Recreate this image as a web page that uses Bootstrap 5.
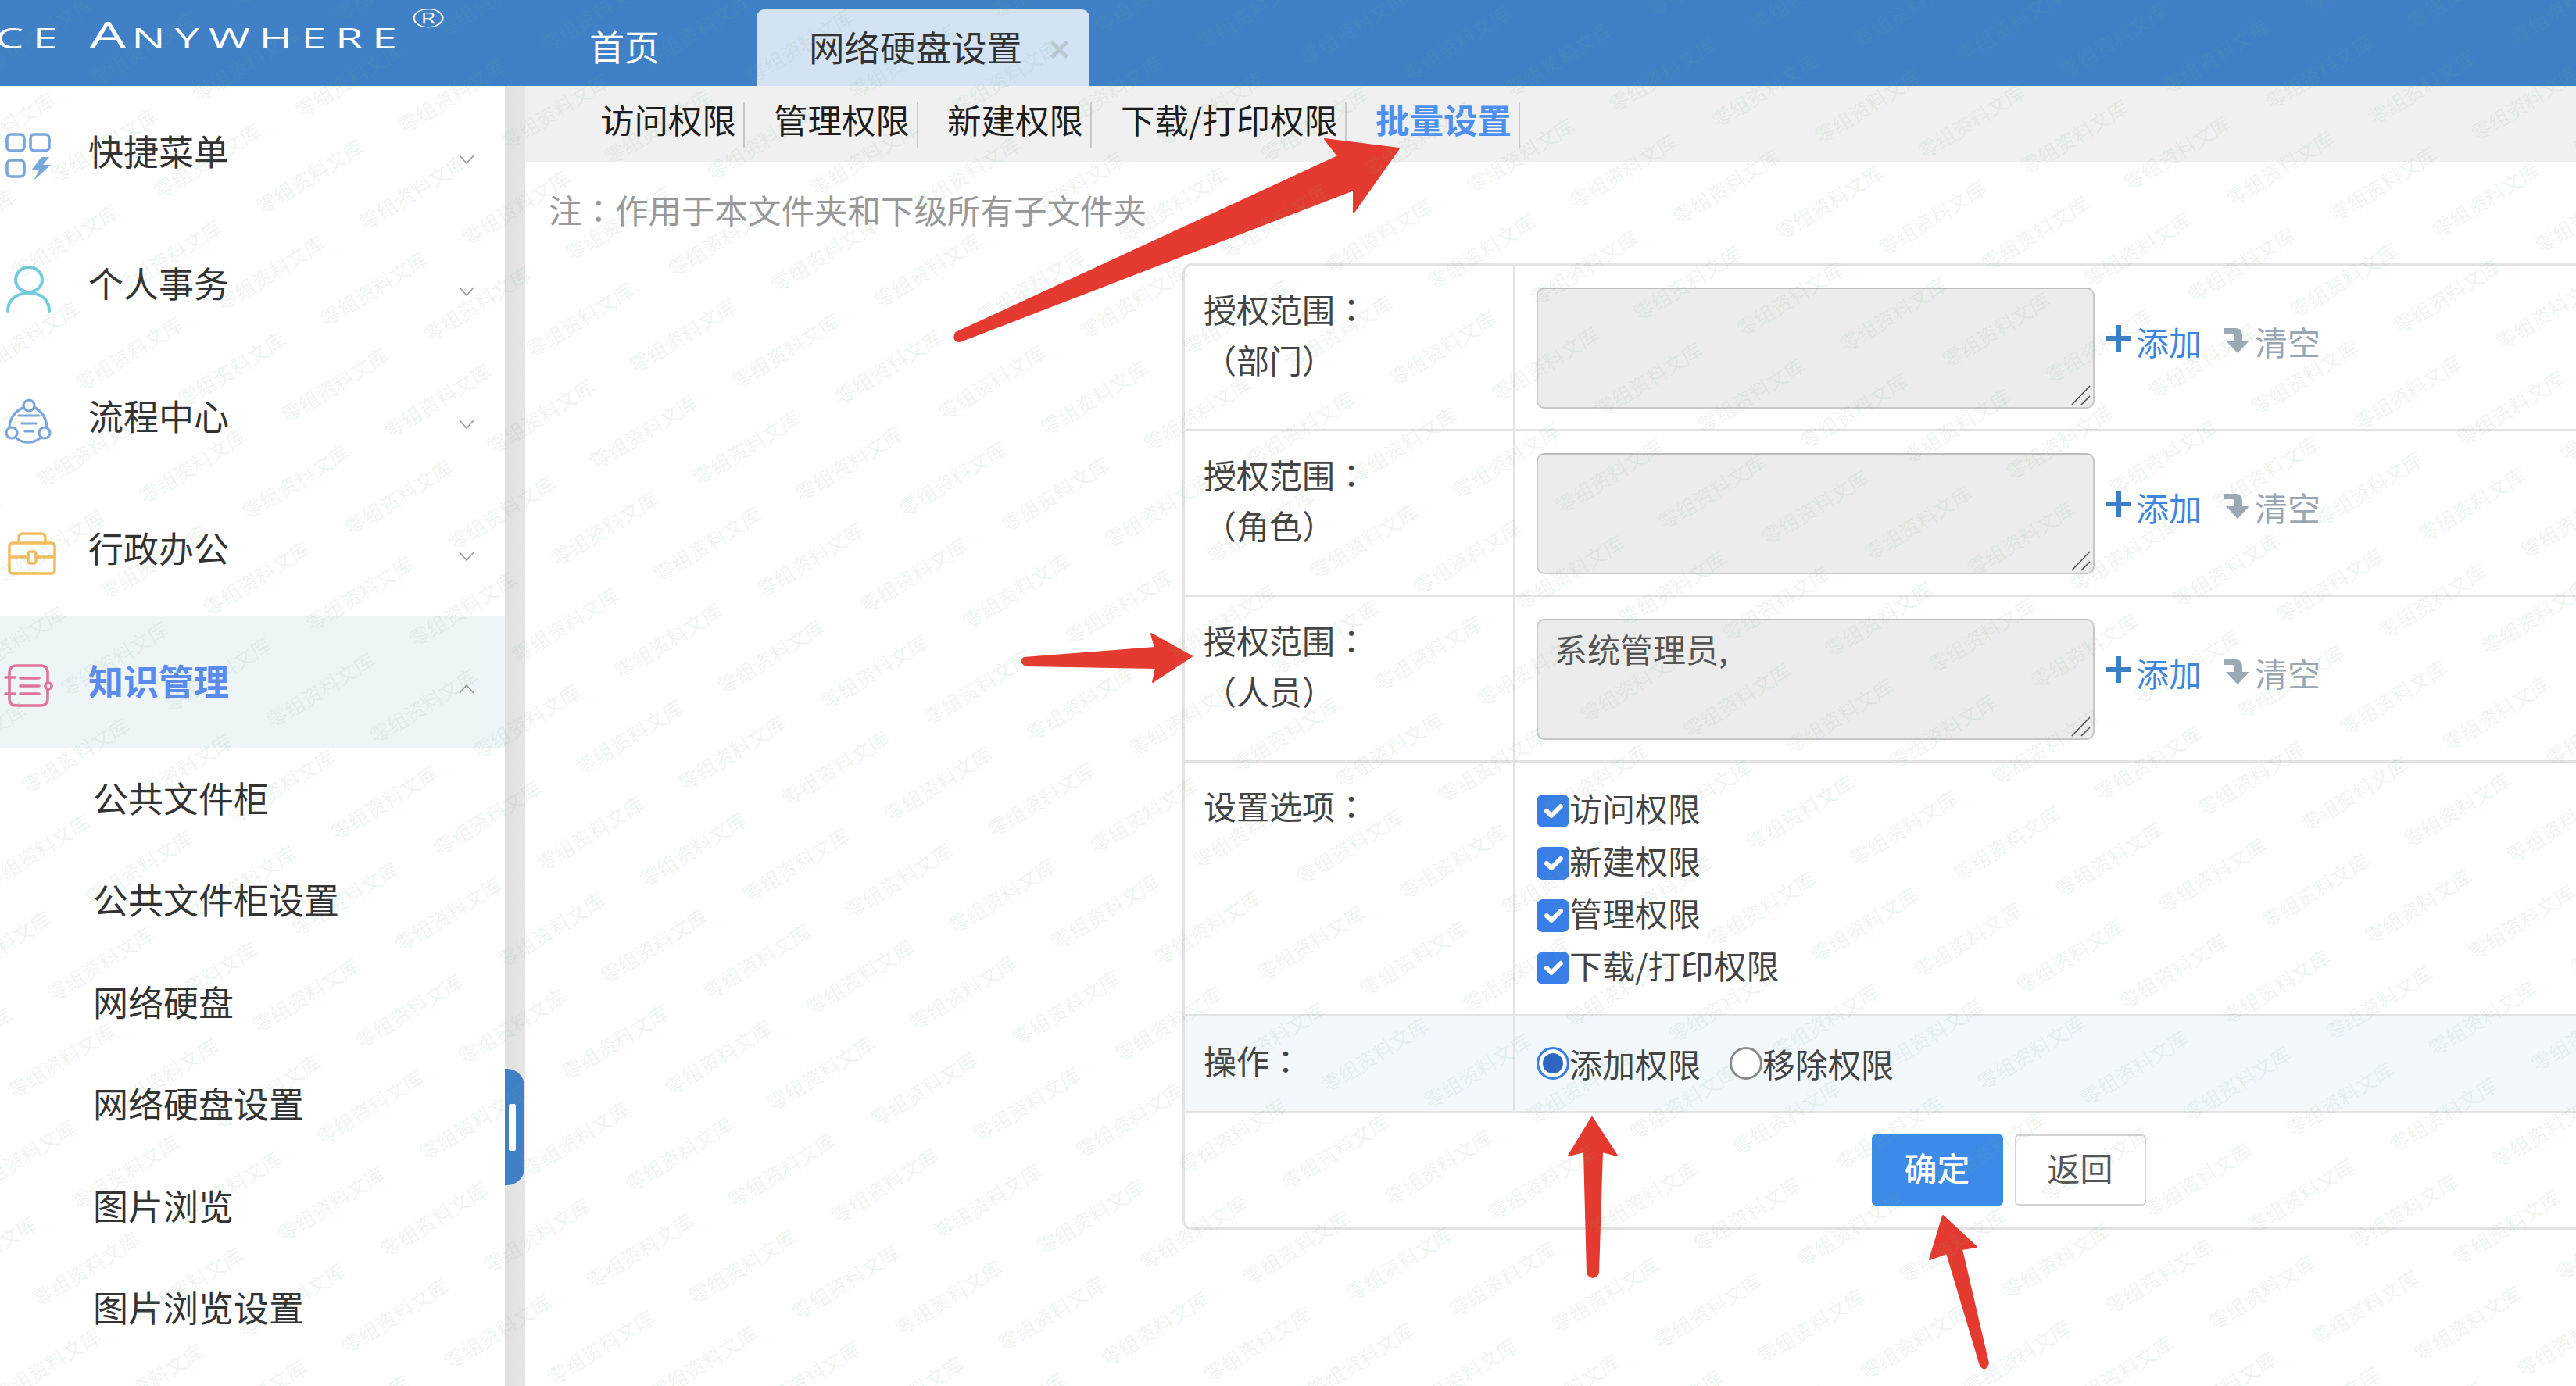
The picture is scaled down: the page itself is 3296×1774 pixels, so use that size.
<!DOCTYPE html>
<html lang="zh-CN">
<head>
<meta charset="utf-8">
<title>网络硬盘设置</title>
<link rel="stylesheet" href="https://cdn.jsdelivr.net/npm/bootstrap@5.3.0/dist/css/bootstrap.min.css">
<style>
html,body{width:3296px;height:1774px;overflow:hidden;margin:0;background:#fff}
body{color:#333;font-family:"Noto Sans CJK SC","Liberation Sans",sans-serif;font-size:42px;line-height:1.2}
.top-bar{height:110px;background:#4080c6;flex:none}
.brand-box{width:754px;flex:none;overflow:hidden;color:#fff;font-family:"Open Sans",sans-serif;font-weight:400;white-space:nowrap;padding-top:14px}
.brand-inner{margin-left:-6px;font-size:36px;letter-spacing:7.2px;line-height:60px;transform:scaleX(1.6);transform-origin:left center}
.brand-big{font-size:47px;letter-spacing:4px}
.brand-gap{display:inline-block;width:18px}
.brand-reg{font-size:33px;font-weight:300;letter-spacing:0;vertical-align:27px;margin-left:4px;line-height:0}
.home-tab{color:#fff;font-size:45px;width:214px;padding-top:29px;line-height:60px}
.cur-tab{width:426px;margin-top:12px;height:98px;background:#d3e3f3;border-radius:10px 10px 0 0;padding-left:67px;font-size:45.5px;line-height:94px;color:#333}
.cur-close{color:#bcc7d2;font-weight:700;font-size:46px;margin-left:34px;font-family:"Liberation Sans",sans-serif}
.body-row{height:1664px}
.side-menu{width:646px;flex:none;background:#fff}
.side-row{height:169.5px;font-size:45px;color:#333;padding-right:39px}
.side-row>span{padding-bottom:4px}
.side-row.is-open{background:#eef5f7;color:#5b8bef;font-weight:700}
.side-ico{width:113px;height:70px;flex:none;overflow:visible}
.side-chev{margin-top:18px;flex:none;margin-left:auto}
.sub-row{height:130.6px;padding-left:119px;font-size:45px;color:#333;line-height:126.6px}
.split-strip{width:26px;flex:none;background:linear-gradient(to right,#e0e0e0,#e6e6e6)}
.split-grip{width:25px;height:149px;margin-top:1258px;background:#4080c6;border-radius:0 22px 22px 0;padding-left:5px}
.split-grip i{display:block;width:9px;height:60px;background:#fff;border-radius:2px}
.work-area{flex:1 1 auto;min-width:0;overflow:hidden;background:#fff}
.tab-bar{height:97px;background:#f0f0f0;padding:20px 0 0 96px;flex:none}
.tab-item{height:60px;font-size:43.5px;line-height:46px;color:#1c1c1c;padding-right:9px;margin-right:37px;border-right:2px solid #c9c9c9;white-space:nowrap}
.tab-item.is-on{color:#4e90f0;font-weight:700}
.note-line{font-size:42.5px;line-height:60px;color:#999;padding:31px 0 2px 30px}
.mid-colon{font-family:"Noto Sans CJK TC",sans-serif}
.perm-table{width:2114px;margin:37px 0 0 841px;table-layout:fixed;border-collapse:separate;border-spacing:0;border:3px solid #e3e3e3;border-radius:12px 0 0 12px;font-size:42px;color:#444}
.perm-table>tbody>tr>td{padding:0;border-width:0 0 3px 0;border-style:solid;border-color:#e3e3e3;background:transparent;color:#444;box-shadow:none}
.perm-table>tbody>tr>td.lbl-cell{width:422px;border-right:2px solid #e3e3e3;padding:22px 0 0 24px;line-height:65px}
.perm-table>tbody>tr>td.val-cell{padding:28px 0 0 28px}
.perm-table>tbody>tr.h-a>td{height:212px}
.perm-table>tbody>tr.h-b>td{height:325px}
.perm-table>tbody>tr.h-c>td{height:124px;background:#f3f8fd;padding-top:0;padding-bottom:0;vertical-align:middle}
.perm-table>tbody>tr.h-c>td.lbl-cell{padding-bottom:11px;padding-top:0}
.perm-table>tbody>tr.h-d>td{height:146px;border-bottom:0;padding-top:27px;vertical-align:top}
.box-wrap{width:714px;height:155px;flex:none}
.area-input{width:714px;height:155px;background:#ececec;border:2px solid #c8c8c8;border-top-color:#bdbdbd;border-radius:10px;padding:10px 21px;font-size:42px;line-height:52px;color:#555;resize:none}
.area-input:focus{background:#ececec;border-color:#c8c8c8;box-shadow:none;color:#555}
.area-grip{position:absolute;right:4px;bottom:3px}
.act-add{color:#3f86e0;margin-left:15px;padding-bottom:18px;text-decoration:none;line-height:60px;gap:6px}
.act-add svg{margin-top:-8px}
.act-clear{color:#9aa7b3;margin-left:28px;padding-bottom:18px;text-decoration:none;line-height:60px;gap:6px}
.act-clear svg{margin-top:-4px}
.chk-line{height:67px;gap:0;color:#444;line-height:1}
.chk-line>span{padding-bottom:8px}
.chk-line .form-check-input,.rad-line .form-check-input{width:42px;height:42px;margin:0;flex:none}
.chk-line .form-check-input:checked{background-color:#3a7ee8;border-color:#3a7ee8;border-radius:8px}
.rad-line{gap:0}
.rad-line .form-check-input{border:3px solid #8a8a8a;background-color:#fff}
.rad-line .form-check-input:checked{background:#2f67c0;border:3px solid #3a7ee8;box-shadow:inset 0 0 0 5px #fff}
.rad-second{margin-left:37px}
.pair-gap{gap:15px}
.btn-ok,.btn-back{width:168px;height:91px;font-size:42px;padding:0 0 6px;border-radius:5px;line-height:1.2}
.btn-ok{background:#3d8be8;border-color:#3d8be8;color:#fff;font-weight:500}
.btn-back{background:#fff;border:2px solid #d4d4d4;color:#555}
.over-layer{position:absolute;left:0;top:0;width:3296px;height:1774px;pointer-events:none}
.wm-text{font-family:"Noto Sans CJK SC",sans-serif;font-size:26px;fill:rgba(110,180,120,.13)}
</style>
</head>
<body>
<header class="top-bar d-flex">
  <div class="brand-box">
    <div class="brand-inner">CE<span class="brand-gap"></span><span class="brand-big">A</span>NYWHERE<span class="brand-reg">®</span></div>
  </div>
  <div class="home-tab">首页</div>
  <div class="cur-tab">网络硬盘设置<span class="cur-close">×</span></div>
</header>

<div class="body-row d-flex">
  <aside class="side-menu">
    <div class="side-row d-flex align-items-center">
      <svg class="side-ico" viewBox="0 0 113 70" fill="none" stroke="#7ba6dc" stroke-width="3.6"><rect x="9" y="12" width="22" height="21" rx="5"/><rect x="39" y="12" width="24" height="21" rx="5"/><rect x="9" y="45" width="22" height="21" rx="5"/><path d="M53 41L40 58L50 58L43 71L65 51L55 51L63 41Z" fill="#7ba6dc" stroke="none"/></svg>
      <span>快捷菜单</span>
      <svg class="side-chev" width="20" height="12" viewBox="0 0 20 12" fill="none" stroke="#999" stroke-width="1.6"><path d="M1 1l9 10 9-10"/></svg>
    </div>
    <div class="side-row d-flex align-items-center">
      <svg class="side-ico" viewBox="0 0 113 70" fill="none" stroke="#74cbdd" stroke-width="4" stroke-linecap="round"><ellipse cx="37" cy="29" rx="17" ry="16"/><path d="M10 69c0-14 11-23 27-23s26 9 26 23"/></svg>
      <span>个人事务</span>
      <svg class="side-chev" width="20" height="12" viewBox="0 0 20 12" fill="none" stroke="#999" stroke-width="1.6"><path d="M1 1l9 10 9-10"/></svg>
    </div>
    <div class="side-row d-flex align-items-center">
      <svg class="side-ico" viewBox="0 0 113 70" fill="none" stroke="#7ba6dc" stroke-width="3.2" stroke-linecap="round"><circle cx="37" cy="20" r="7"/><circle cx="15" cy="55" r="7"/><circle cx="57" cy="55" r="7"/><path d="M29 23C19 28 13 36 12 47M45 23c9 5 14 13 15 24M21 62c9 7 21 7 30 0"/><path d="M24 33h26M28 43h18M32 53h10"/></svg>
      <span>流程中心</span>
      <svg class="side-chev" width="20" height="12" viewBox="0 0 20 12" fill="none" stroke="#999" stroke-width="1.6"><path d="M1 1l9 10 9-10"/></svg>
    </div>
    <div class="side-row d-flex align-items-center">
      <svg class="side-ico" viewBox="0 0 113 70" fill="none" stroke="#f2bd5f" stroke-width="3.6"><rect x="12" y="27" width="58" height="39" rx="4"/><path d="M24 27v-7c0-3 2-5 5-5h24c3 0 5 2 5 5v7"/><path d="M12 45h24M46 45h24"/><rect x="36" y="38" width="10" height="15" rx="3"/></svg>
      <span>行政办公</span>
      <svg class="side-chev" width="20" height="12" viewBox="0 0 20 12" fill="none" stroke="#999" stroke-width="1.6"><path d="M1 1l9 10 9-10"/></svg>
    </div>
    <div class="side-row is-open d-flex align-items-center">
      <svg class="side-ico" viewBox="0 0 113 70" fill="none" stroke="#e0739a" stroke-width="3.6" stroke-linecap="round"><rect x="12" y="14" width="49" height="51" rx="8"/><path d="M7 29h12M7 50h12"/><path d="M26 30h24M26 40h24M26 50h24"/><circle cx="62" cy="40" r="4" fill="#eef5f7"/></svg>
      <span>知识管理</span>
      <svg class="side-chev" width="20" height="12" viewBox="0 0 20 12" fill="none" stroke="#999" stroke-width="1.6"><path d="M1 11l9-10 9 10"/></svg>
    </div>
    <div class="sub-row">公共文件柜</div>
    <div class="sub-row">公共文件柜设置</div>
    <div class="sub-row">网络硬盘</div>
    <div class="sub-row">网络硬盘设置</div>
    <div class="sub-row">图片浏览</div>
    <div class="sub-row">图片浏览设置</div>
  </aside>

  <div class="split-strip">
    <div class="split-grip d-flex align-items-center"><i></i></div>
  </div>

  <main class="work-area d-flex flex-column">
    <nav class="tab-bar d-flex">
      <div class="tab-item">访问权限</div>
      <div class="tab-item">管理权限</div>
      <div class="tab-item">新建权限</div>
      <div class="tab-item">下载/打印权限</div>
      <div class="tab-item is-on">批量设置</div>
    </nav>
    <div class="note-line">注<span class="mid-colon" lang="zh-TW">：</span>作用于本文件夹和下级所有子文件夹</div>
    <table class="table perm-table">
      <tbody>
        <tr class="h-a">
          <td class="lbl-cell">授权范围<span class="mid-colon" lang="zh-TW">：</span><br>（部门）</td>
          <td class="val-cell">
            <div class="d-flex align-items-center">
              <div class="box-wrap position-relative">
                <textarea class="form-control area-input" readonly></textarea>
                <svg class="area-grip" width="28" height="28" viewBox="0 0 28 28" fill="none" stroke="#555" stroke-width="1.6"><path d="M3 26L26 2M15 26L26 15"/></svg>
              </div>
              <a class="act-add d-flex align-items-center" href="#"><svg width="32" height="34" viewBox="0 0 32 34" fill="#3a7ec8"><path d="M13 0h6v14h13v6H19v14h-6V20H0v-6h13z"/></svg>添加</a>
              <a class="act-clear d-flex align-items-center" href="#"><svg width="34" height="34" viewBox="0 0 34 34" fill="#9aa9b5"><path d="M1 2h14c7 0 9 5 9 10v6h9L18 34 3 18h11v-5c0-3-1-4-4-4H1z"/></svg>清空</a>
            </div>
          </td>
        </tr>
        <tr class="h-a">
          <td class="lbl-cell">授权范围<span class="mid-colon" lang="zh-TW">：</span><br>（角色）</td>
          <td class="val-cell">
            <div class="d-flex align-items-center">
              <div class="box-wrap position-relative">
                <textarea class="form-control area-input" readonly></textarea>
                <svg class="area-grip" width="28" height="28" viewBox="0 0 28 28" fill="none" stroke="#555" stroke-width="1.6"><path d="M3 26L26 2M15 26L26 15"/></svg>
              </div>
              <a class="act-add d-flex align-items-center" href="#"><svg width="32" height="34" viewBox="0 0 32 34" fill="#3a7ec8"><path d="M13 0h6v14h13v6H19v14h-6V20H0v-6h13z"/></svg>添加</a>
              <a class="act-clear d-flex align-items-center" href="#"><svg width="34" height="34" viewBox="0 0 34 34" fill="#9aa9b5"><path d="M1 2h14c7 0 9 5 9 10v6h9L18 34 3 18h11v-5c0-3-1-4-4-4H1z"/></svg>清空</a>
            </div>
          </td>
        </tr>
        <tr class="h-a">
          <td class="lbl-cell">授权范围<span class="mid-colon" lang="zh-TW">：</span><br>（人员）</td>
          <td class="val-cell">
            <div class="d-flex align-items-center">
              <div class="box-wrap position-relative">
                <textarea class="form-control area-input" readonly>系统管理员,</textarea>
                <svg class="area-grip" width="28" height="28" viewBox="0 0 28 28" fill="none" stroke="#555" stroke-width="1.6"><path d="M3 26L26 2M15 26L26 15"/></svg>
              </div>
              <a class="act-add d-flex align-items-center" href="#"><svg width="32" height="34" viewBox="0 0 32 34" fill="#3a7ec8"><path d="M13 0h6v14h13v6H19v14h-6V20H0v-6h13z"/></svg>添加</a>
              <a class="act-clear d-flex align-items-center" href="#"><svg width="34" height="34" viewBox="0 0 34 34" fill="#9aa9b5"><path d="M1 2h14c7 0 9 5 9 10v6h9L18 34 3 18h11v-5c0-3-1-4-4-4H1z"/></svg>清空</a>
            </div>
          </td>
        </tr>
        <tr class="h-b">
          <td class="lbl-cell">设置选项<span class="mid-colon" lang="zh-TW">：</span></td>
          <td class="val-cell">
            <label class="chk-line d-flex align-items-center"><input class="form-check-input" type="checkbox" checked><span>访问权限</span></label>
            <label class="chk-line d-flex align-items-center"><input class="form-check-input" type="checkbox" checked><span>新建权限</span></label>
            <label class="chk-line d-flex align-items-center"><input class="form-check-input" type="checkbox" checked><span>管理权限</span></label>
            <label class="chk-line d-flex align-items-center"><input class="form-check-input" type="checkbox" checked><span>下载/打印权限</span></label>
          </td>
        </tr>
        <tr class="h-c">
          <td class="lbl-cell">操作<span class="mid-colon" lang="zh-TW">：</span></td>
          <td class="val-cell">
            <div class="d-flex">
              <label class="rad-line d-flex align-items-center"><input class="form-check-input" type="radio" name="op" checked>添加权限</label>
              <label class="rad-line rad-second d-flex align-items-center"><input class="form-check-input" type="radio" name="op">移除权限</label>
            </div>
          </td>
        </tr>
        <tr class="h-d">
          <td colspan="2">
            <div class="d-flex justify-content-center pair-gap">
              <button type="button" class="btn btn-ok">确定</button>
              <button type="button" class="btn btn-back">返回</button>
            </div>
          </td>
        </tr>
      </tbody>
    </table>
  </main>
</div>

<svg class="over-layer" viewBox="0 0 3296 1774" id="arrows">
  <g fill="#e53a30" stroke="#e53a30" stroke-width="2" stroke-linejoin="round">
    <path d="M1223 426L1712 200L1695 178L1790 190L1732 272L1732 243L1228 437Q1218 436 1223 426Z"/>
    <path d="M1310 842L1478 829L1473 811L1525 840L1475 873L1479 855L1313 852Q1303 847 1310 842Z"/>
    <path d="M2037 1430L2069 1479L2050 1474L2045 1630Q2038 1640 2031 1630L2027 1474L2007 1479Z"/>
    <path d="M2486 1556L2529 1596L2510 1599L2544 1745Q2540 1756 2534 1748L2491 1604L2469 1612Z"/>
  </g>
</svg>
<svg class="over-layer" viewBox="0 0 3296 1774" id="marks"></svg>

<script src="https://cdn.jsdelivr.net/npm/bootstrap@5.3.0/dist/js/bootstrap.bundle.min.js"></script>
<script>
(function(){
  var host=document.getElementById('marks'),ns='http://www.w3.org/2000/svg';
  var ax=131.7,ay=20,bx=-50,by=123.5,ox=875,oy=432;
  for(var i=-40;i<40;i++){for(var j=-30;j<30;j++){
    var x=ox+i*ax+j*bx,y=oy+i*ay+j*by;
    if(x<-100||x>3396||y<-100||y>1874)continue;
    var t=document.createElementNS(ns,'text');
    t.setAttribute('class','wm-text');
    t.setAttribute('text-anchor','middle');
    t.setAttribute('dominant-baseline','middle');
    t.setAttribute('transform','translate('+x+' '+y+') rotate(-32)');
    t.textContent='零组资料文库';
    host.appendChild(t);
  }}
})();
</script>
</body>
</html>
